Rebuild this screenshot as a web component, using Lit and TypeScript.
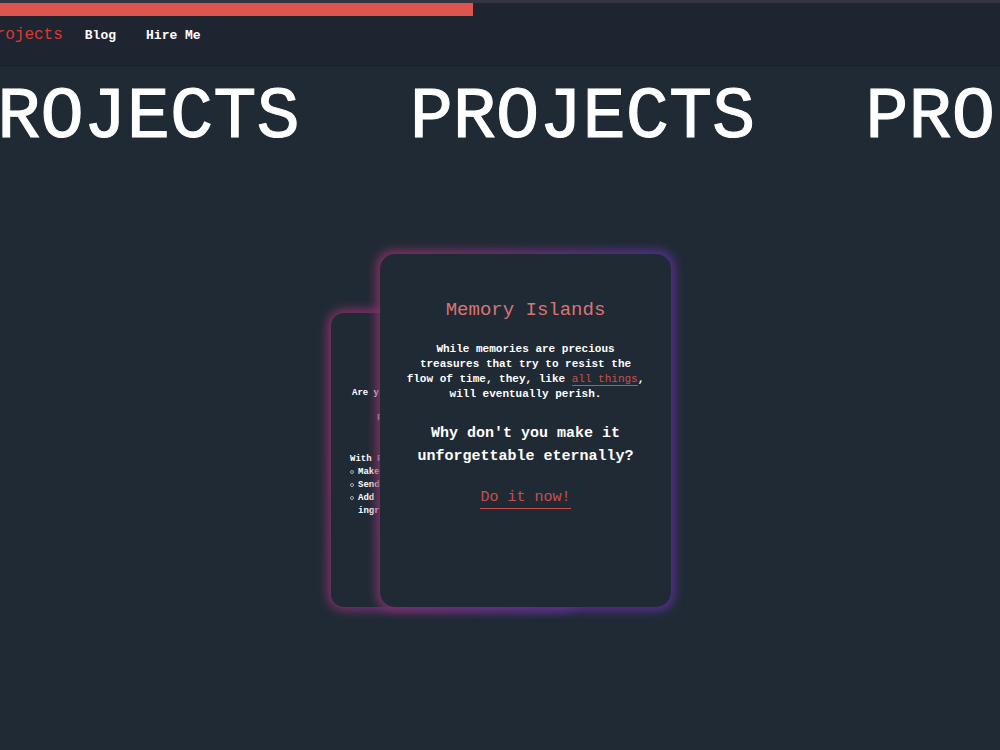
import { LitElement, html, css } from "lit";
import { customElement, property } from "lit/decorators.js";

@customElement("site-header")
class SiteHeader extends LitElement {
  @property({ type: Number }) progress = 0;

  static styles = css`
    :host {
      display: block;
      background: #1f2530;
      border-top: 3px solid #343444;
      border-bottom: 1px solid #1a202b;
    }
    .bar {
      height: 13px;
      background: #e0544e;
    }
    .links {
      display: flex;
      align-items: center;
      gap: 30px;
      height: 38px;
      margin: 0 0 0 -14px;
      padding: 0 0 11px;
      list-style: none;
    }
    .link {
      color: #fff;
      font-size: 13px;
      font-weight: 700;
      text-decoration: none;
    }
    .item.active {
      margin-right: -8px;
    }
    .link.active {
      color: #dc3a32;
      font-size: 16px;
      font-weight: 400;
    }
  `;

  render() {
    return html`
      <div class="bar" style="width: ${this.progress}%"></div>
      <nav>
        <ul class="links">
          <li class="item active"><a class="link active" href="#projects" aria-current="page">Projects</a></li>
          <li class="item"><a class="link" href="#blog">Blog</a></li>
          <li class="item"><a class="link" href="#hire">Hire Me</a></li>
        </ul>
      </nav>
    `;
  }
}

@customElement("title-marquee")
class TitleMarquee extends LitElement {
  @property() text = "";

  static styles = css`
    :host {
      display: block;
      overflow: hidden;
    }
    .track {
      display: flex;
      gap: 110px;
      margin: 16px 0 0 -46px;
      color: #fff;
      font-size: 72px;
      font-weight: 400;
      line-height: 72px;
      white-space: nowrap;
      -webkit-text-stroke: 1px #fff;
    }
    .word {
      flex: none;
      margin: 0;
      font: inherit;
    }
  `;

  render() {
    return html`
      <div class="track">
        <h1 class="word">${this.text}</h1>
        <span class="word" aria-hidden="true">${this.text}</span>
        <span class="word" aria-hidden="true">${this.text}</span>
      </div>
    `;
  }
}

@customElement("glow-card")
class GlowCard extends LitElement {
  static styles = css`
    :host {
      display: block;
      position: relative;
      isolation: isolate;
    }
    .glow {
      position: absolute;
      inset: -4px;
      z-index: -1;
      border-radius: 18px;
      background: linear-gradient(100deg, #7e3062 10%, #54308c 75%);
      filter: blur(5px);
    }
    .face {
      box-sizing: border-box;
      height: 100%;
      min-height: inherit;
      overflow: hidden;
      border-radius: var(--card-radius, 15px);
      background: #202a35;
    }
  `;

  render() {
    return html`<div class="glow"></div><div class="face"><slot></slot></div>`;
  }
}

@customElement("app-root")
class AppRoot extends LitElement {
  static styles = css`
    :host {
      display: block;
      min-height: 100vh;
      overflow: hidden;
      background: #202a35;
      color: #fff;
      font-family: "Liberation Mono", "DejaVu Sans Mono", monospace;
    }
    .deck {
      display: flex;
      justify-content: center;
      align-items: flex-end;
      margin-top: 100px;
      padding-left: 2px;
    }
    .back {
      width: 245px;
      min-height: 294px;
      margin-right: -196px;
      --card-radius: 13px;
    }
    .front {
      width: 291px;
      min-height: 353px;
    }
    .recipe {
      padding: 74px 19px 0;
      font-size: 9px;
      font-weight: 700;
      line-height: 13px;
      white-space: nowrap;
    }
    .recipe p {
      margin: 0 0 12px 2px;
    }
    .recipe .inset {
      margin: 0 0 28px 27px;
    }
    .recipe .lead {
      margin: 0;
    }
    .steps {
      margin: 0;
      padding: 0;
      list-style: none;
    }
    .step {
      display: flex;
      gap: 4px;
    }
    .dot {
      flex: none;
      box-sizing: border-box;
      width: 4px;
      height: 4px;
      margin-top: 4px;
      border: 1px solid #a9adb3;
      border-radius: 50%;
    }
    .memory {
      display: flex;
      flex-direction: column;
      align-items: center;
      gap: 20px;
      padding: 44px 24px;
      text-align: center;
    }
    .title {
      margin: 0;
      color: #dd7473;
      font-size: 19px;
      font-weight: 400;
      line-height: 24px;
    }
    .text {
      margin: 0;
      font-size: 11px;
      font-weight: 700;
      line-height: 15px;
    }
    .question {
      margin: 0;
      font-size: 15px;
      font-weight: 700;
      line-height: 23px;
    }
    .accent {
      color: #c9504f;
      font-weight: 400;
      text-decoration: none;
      border-bottom: 1px solid #c9504f;
    }
    .action {
      font-size: 15px;
      line-height: 20px;
    }
  `;

  render() {
    return html`
      <site-header .progress=${47.3}></site-header>
      <main>
        <title-marquee .text=${"PROJECTS"}></title-marquee>
        <section class="deck">
          <glow-card class="back">
            <div class="recipe">
              <p>Are y</p>
              <p class="inset">F</p>
              <p class="lead">With F</p>
              <ul class="steps">
                <li class="step"><span class="dot"></span><span>Make</span></li>
                <li class="step"><span class="dot"></span><span>Send</span></li>
                <li class="step"><span class="dot"></span><span>Add<br />ingr</span></li>
              </ul>
            </div>
          </glow-card>
          <glow-card class="front">
            <article class="memory">
              <h2 class="title">Memory Islands</h2>
              <p class="text">
                While memories are precious treasures that try to resist the
                flow of time, they, like <a class="accent" href="#things">all things</a>, will
                eventually perish.
              </p>
              <p class="question">Why don't you make it unforgettable eternally?</p>
              <a class="accent action" href="#start">Do it now!</a>
            </article>
          </glow-card>
        </section>
      </main>
    `;
  }
}
